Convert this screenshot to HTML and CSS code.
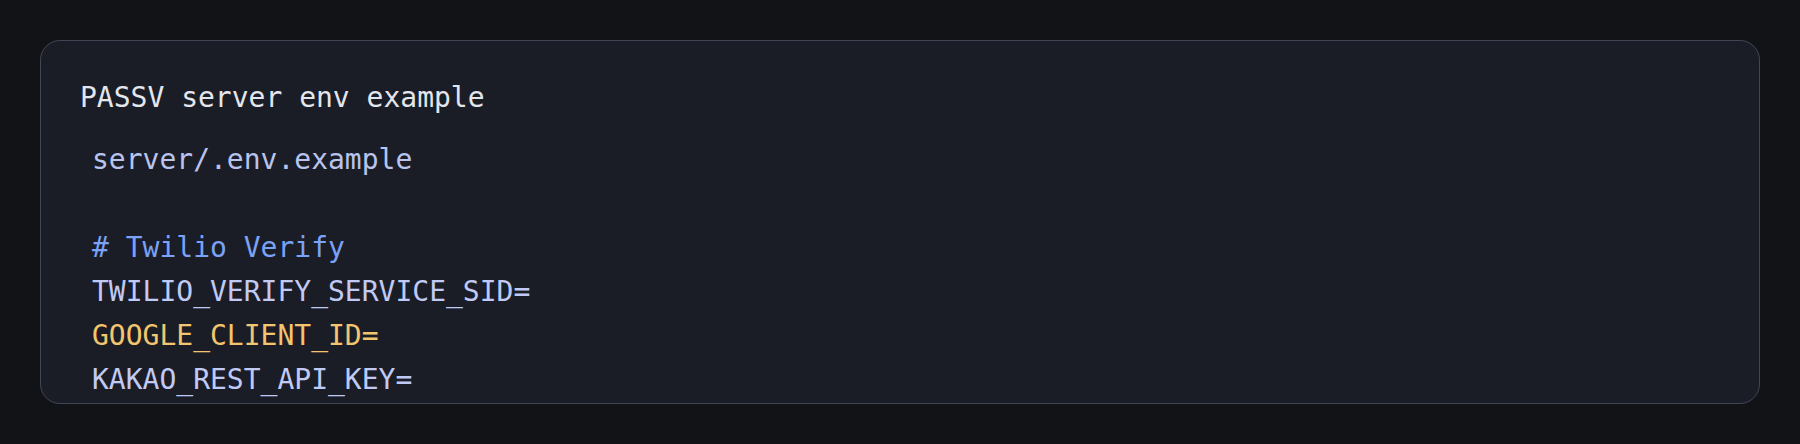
FILE: index.html
```html
<!DOCTYPE html>
<html lang="en">
<head>
<meta charset="utf-8">
<title>PASSV server env example</title>
<link rel="stylesheet" href="styles.css">
</head>
<body>
<main class="page">
  <section class="card">
    <h2 class="title">PASSV server env example</h2>
    <pre class="code"><span class="path">server/.env.example</span>

<span class="comment"># Twilio Verify</span>
TWILIO_VERIFY_SERVICE_SID=
<span class="hl">GOOGLE_CLIENT_ID=</span>
KAKAO_REST_API_KEY=</pre>
  </section>
</main>
</body>
</html>
```

FILE: styles.css
```css
html, body {
  margin: 0;
  padding: 0;
  background: #121317;
}

.page {
  padding: 40px;
  height: 444px;
  box-sizing: border-box;
}

.card {
  height: 364px;
  box-sizing: border-box;
  background: #1b1d26;
  border: 1px solid #414657;
  border-radius: 20px;
  padding: 35px 40px 0 39px;
  overflow: hidden;
  font-family: "DejaVu Sans Mono", "Liberation Mono", monospace;
  font-size: 28px;
  line-height: 44px;
}

.title {
  margin: 0 0 18px;
  font: inherit;
  font-weight: normal;
  color: #e4e6ee;
}

.code {
  margin: 0;
  padding: 0 0 0 12px;
  font: inherit;
  color: #c0caf5;
}

.path {
  color: #b9c4ee;
}

.comment {
  color: #7aa2f7;
}

.hl {
  color: #f2c56e;
}
```
